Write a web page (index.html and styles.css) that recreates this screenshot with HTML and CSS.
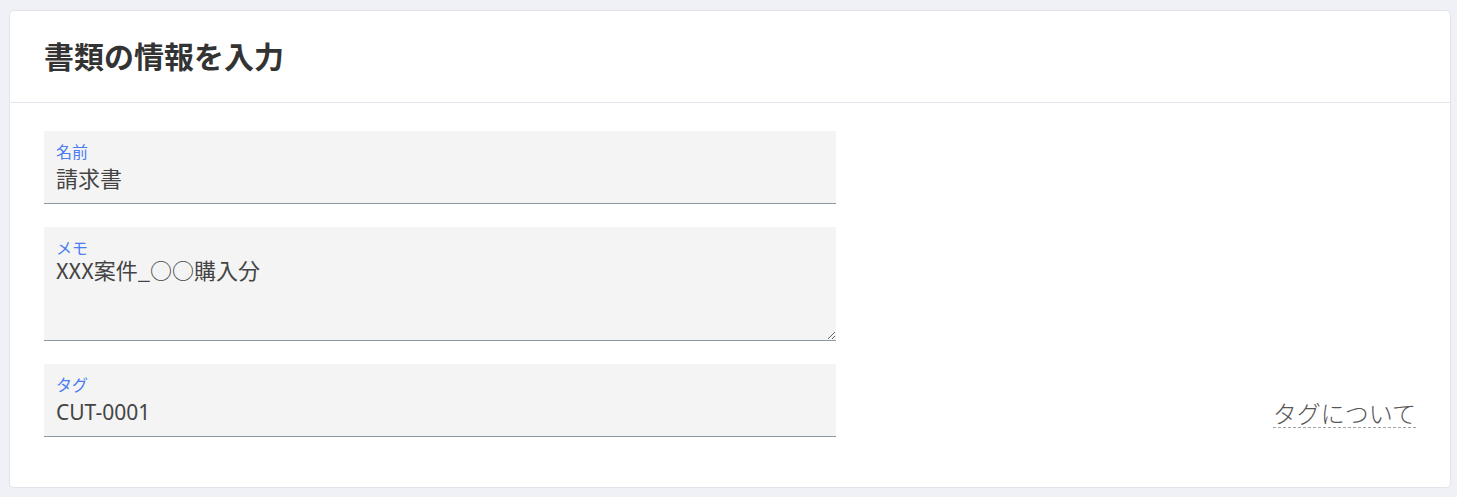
FILE: index.html
```html
<!DOCTYPE html>
<html lang="ja">
<head>
<meta charset="utf-8">
<link rel="stylesheet" href="styles.css">
</head>
<body>
<div class="card">
  <div class="card-header"><h1 class="title">書類の情報を入力</h1></div>
  <div class="card-body">
    <div class="field">
      <label class="field-label" for="name">名前</label>
      <input class="field-input" id="name" type="text" value="請求書">
    </div>
    <div class="field field-area">
      <label class="field-label" for="memo">メモ</label>
      <textarea class="field-input field-textarea" id="memo">XXX案件_○○購入分</textarea>
    </div>
    <div class="row">
      <div class="field">
        <label class="field-label" for="tag">タグ</label>
        <input class="field-input field-tag" id="tag" type="text" value="CUT-0001">
      </div>
      <a class="help-link" href="#">タグについて</a>
    </div>
  </div>
</div>
</body>
</html>
```
FILE: styles.css
```css
* { box-sizing: border-box; }
html, body { margin: 0; }
body {
  background: #f0f1f6;
  padding: 10px 6px 9px 9px;
  font-family: "Noto Sans CJK JP", "Noto Sans", sans-serif;
}
.card {
  background: #fff;
  border: 1px solid #e2e4ec;
  border-radius: 5px;
  height: 478px;
}
.card-header {
  height: 92px;
  border-bottom: 1px solid #e4e6ee;
  display: flex;
  align-items: center;
  padding-left: 34px;
}
.title {
  margin: 0;
  font-size: 30px;
  font-weight: 700;
  color: #333;
  line-height: 40px;
  position: relative;
  top: -2px;
}
.card-body {
  padding: 28px 34px 0 34px;
  display: flex;
  flex-direction: column;
  gap: 23px;
}
.field {
  width: 792px;
  height: 73px;
  background: #f4f4f4;
  border-bottom: 1px solid #8d96ad;
  display: flex;
  flex-direction: column;
  padding: 9px 12px 0 12px;
}
.field-area { height: 114px; padding-right: 0; padding-bottom: 0; }
.field-label {
  font-size: 16px;
  line-height: 22px;
  color: #4a7cf2;
}
.field-input {
  border: 0;
  background: transparent;
  font-family: "Noto Sans CJK JP", "Noto Sans", sans-serif;
  font-size: 22px;
  color: #444;
  padding: 0;
  margin: 0;
  outline: none;
  height: 30px;
  line-height: 30px;
}
.field-tag {
  font-family: "Noto Sans", "Noto Sans CJK JP", sans-serif;
  margin-top: 2px;
  font-size: 21px;
}
.field-textarea {
  flex: 1;
  resize: vertical;
  height: auto;
  margin-top: -4px;
}
.row {
  display: flex;
  justify-content: space-between;
  align-items: flex-end;
}
.help-link {
  font-size: 24px;
  font-weight: 300;
  color: #555;
  text-decoration: none;
  border-bottom: 1px dashed #a0a4ad;
  line-height: 28px;
  margin-bottom: 9px;
}
```
